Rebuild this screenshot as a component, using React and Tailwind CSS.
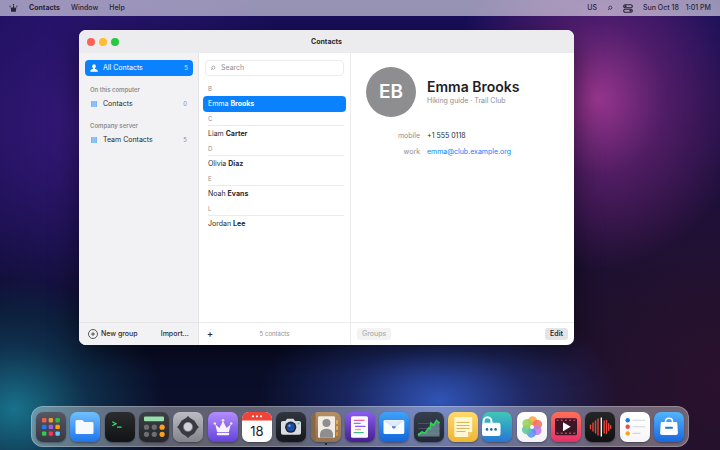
import { useState } from 'react';

// ---------------------------------------------------------
// Data
// ---------------------------------------------------------
const CONTACTS = [
  { first: 'Emma', last: 'Brooks', note: 'Hiking guide · Trail Club', mobile: '+1 555 0118', work: 'emma@club.example.org' },
  { first: 'Liam', last: 'Carter' },
  { first: 'Olivia', last: 'Diaz' },
  { first: 'Noah', last: 'Evans' },
  { first: 'Jordan', last: 'Lee' },
];

const GROUPS = [
  { title: 'On this computer', name: 'Contacts', count: 0 },
  { title: 'Company server', name: 'Team Contacts', count: 5 },
];

// ---------------------------------------------------------
// Small icons
// ---------------------------------------------------------
const Crown = ({ className }) => (
  <svg viewBox="0 0 20 18" className={className} fill="currentColor" aria-hidden="true">
    <path d="M3.200 6l4 3.600L10 3l2.800 6.600 4-3.600-1.500 8H4.700z" />
    <path d="M4.500 13.500h11v2.800c0 .7-.5 1.200-1.200 1.200H5.700c-.7 0-1.200-.5-1.200-1.200z" />
    <circle cx="2.200" cy="4.800" r="1.400" />
    <circle cx="10" cy="1.800" r="1.600" />
    <circle cx="17.800" cy="4.800" r="1.400" />
  </svg>
);

const Magnifier = ({ className }) => (
  <svg viewBox="0 0 10 10" className={className} fill="none" stroke="currentColor" strokeWidth="1.200" aria-hidden="true">
    <circle cx="5.600" cy="4.400" r="2.600" />
    <path d="M3.700 6.300L1.600 8.400" />
  </svg>
);

const Toggles = ({ className }) => (
  <svg viewBox="0 0 20 18" className={className} fill="none" stroke="currentColor" strokeWidth="2.200" aria-hidden="true">
    <rect x="1.500" y="1.500" width="17" height="6" rx="2.500" />
    <rect x="1.500" y="10.500" width="17" height="6" rx="2.500" />
    <circle cx="5" cy="4.500" r="2.200" fill="currentColor" stroke="none" />
    <circle cx="15" cy="13.500" r="2.200" fill="currentColor" stroke="none" />
  </svg>
);

const Person = ({ className }) => (
  <svg viewBox="0 0 16 16" className={className} fill="currentColor" aria-hidden="true">
    <ellipse cx="8" cy="4.500" rx="3.600" ry="4.200" />
    <path d="M6 8h4v2c3 .6 5.500 1.700 5.500 4.500v1H.5v-1C.5 11.700 3 10.600 6 10z" />
  </svg>
);

const Book = ({ className }) => (
  <svg viewBox="0 0 12 12" className={className} aria-hidden="true">
    <rect width="12" height="12" fill="#8fc4f9" />
    <path d="M0 0h1.500v12H0zM10.500 0H12v12h-1.500z" fill="#75b3f4" />
    <path d="M3 3h6M3 6h6M3 9h6" stroke="#7db8f6" strokeWidth="1" />
  </svg>
);

// ---------------------------------------------------------
// Dock
// ---------------------------------------------------------
const LAUNCH_COLORS = ['#f0604d', '#f59a23', '#34b84a', '#1e7bf0', '#a05be0', '#ff9f0a', '#34c759', '#f2385a', '#64c8ff'];
const PETALS = ['#fba63c', '#f4705f', '#c07de6', '#5a94f5', '#5cc89a', '#9bd05a'];
const WAVE = [[5.500, 3.500], [8, 8], [10.500, 12], [13, 16], [19.200, 12], [21.500, 13], [23.700, 6.500], [25.700, 2.500]];

const DOCK = [
  {
    name: 'Launchpad',
    tile: 'from-[#565763] to-[#373842]',
    art: LAUNCH_COLORS.map((c, i) => (
      <rect key={i} x={6 + (i % 3) * 6.700} y={6 + Math.floor(i / 3) * 6.700} width="4.400" height="4.400" rx="1.200" fill={c} />
    )),
  },
  {
    name: 'Files',
    tile: 'from-[#70c0ff] to-[#1f74ea]',
    art: <path d="M5.500 9.500c0-1 .6-1.600 1.600-1.600h5.200l2 2.200h7.600c1 0 1.600.6 1.600 1.600v8.700c0 1-.6 1.600-1.600 1.600H7.100c-1 0-1.600-.6-1.600-1.600z" fill="#f6f9ff" />,
  },
  {
    name: 'Terminal',
    tile: 'from-[#2b2c2e] to-[#121314]',
    art: <path d="M7.300 9.800l3.700 2-3.700 2M12 15.200h4.600" fill="none" stroke="#3ddc74" strokeWidth="1.300" />,
  },
  {
    name: 'Calculator',
    tile: 'from-[#3d4045] to-[#232528]',
    art: (
      <>
        <rect x="5" y="4.500" width="20" height="4.800" rx="1" fill="#97e0ab" />
        {[0, 1, 2, 3, 4, 5].map((i) => (
          <circle key={i} cx={7.500 + (i % 3) * 7.800} cy={i < 3 ? 15.200 : 22.300} r="2.600" fill={i % 3 === 2 ? '#ff9f1c' : '#6d6e72'} />
        ))}
      </>
    ),
  },
  {
    name: 'Settings',
    tile: 'from-[#babbc3] to-[#83848c]',
    art: (
      <>
        <circle cx="15" cy="15" r="9" fill="#383b42" />
        <path d="M12 7l3-3 3 3zM12 23l3 3 3-3zM7 12l-3 3 3 3zM23 12l3 3-3 3z" fill="#383b42" />
        <circle cx="15" cy="15" r="5" fill="#7b7d84" />
        <circle cx="15" cy="14.800" r="4.200" fill="#d0d2d7" />
      </>
    ),
  },
  {
    name: 'Crown',
    tile: 'from-[#b38cff] to-[#6541dc]',
    art: (
      <g fill="#f7f2ff">
        <path d="M7.300 12.300l4.100 3.600L15 9l3.600 6.900 4.100-3.600L20.900 20H9.100z" />
        <rect x="8.800" y="20.800" width="12.400" height="2.500" rx="1" />
        <circle cx="6.800" cy="11.500" r="1.300" fill="#ffe0b0" />
        <circle cx="15" cy="8.300" r="1.400" fill="#ffe0b0" />
        <circle cx="23.200" cy="11.500" r="1.300" fill="#ffe0b0" />
      </g>
    ),
  },
  {
    name: 'Calendar',
    tile: 'from-white to-white',
    art: (
      <>
        <rect width="30" height="8.500" fill="#f04438" />
        <circle cx="11" cy="4.300" r="1.100" fill="#fff" />
        <circle cx="15" cy="4.300" r="1.100" fill="#fff" />
        <circle cx="19" cy="4.300" r="1.100" fill="#fff" />
        <text x="15" y="23.800" textAnchor="middle" fontSize="13" fill="#1d1d1f">18</text>
      </>
    ),
  },
  {
    name: 'Camera',
    tile: 'from-[#30353e] to-[#15181e]',
    art: (
      <>
        <path d="M5 11c0-1.200.7-2 2-2h2.500l1.500-2.300h6.500L19 9h4c1.300 0 2 .8 2 2v9.700c0 1.200-.7 2-2 2H7c-1.300 0-2-.8-2-2z" fill="#d9dde1" />
        <circle cx="14.700" cy="15.200" r="5.600" fill="#20262f" />
        <circle cx="14.700" cy="15.200" r="4" fill="#1c4da6" />
        <circle cx="13.500" cy="13.800" r="1.200" fill="#6da4ee" />
        <circle cx="22.500" cy="11.500" r="1" fill="#3ecf8e" />
      </>
    ),
  },
  {
    name: 'Contacts',
    running: true,
    tile: 'from-[#b58f66] to-[#94714c]',
    art: (
      <>
        <rect width="4.500" height="30" fill="#8a6844" />
        <rect x="7" y="4.200" width="17" height="21.500" rx="1.300" fill="#f1ede4" />
        <circle cx="15.500" cy="11" r="4" fill="#8e8e90" />
        <path d="M9 25.700v-3c0-4 2.700-6 6.500-6s6.500 2 6.500 6v3z" fill="#8e8e90" />
        <rect x="25" y="8" width="2" height="4" rx=".8" fill="#e8b04a" />
        <rect x="25" y="14" width="2" height="4" rx=".8" fill="#e8b04a" />
        <rect x="25" y="20" width="2" height="4" rx=".8" fill="#d99636" />
      </>
    ),
  },
  {
    name: 'Text Editor',
    tile: 'from-[#8b5cf2] to-[#45208f]',
    art: (
      <>
        <rect x="6" y="4.200" width="17" height="21.600" rx="1.600" fill="#fbfaff" />
        <g fill="none" strokeWidth="1.300" strokeLinecap="round">
          <path d="M9.200 8.300h9.800" stroke="#ef5da0" />
          <path d="M9.200 11.300h6" stroke="#4a9df5" />
          <path d="M10.500 14.300h9.500" stroke="#8b5cf6" />
          <path d="M10.500 17.500h5" stroke="#efb35a" />
          <path d="M9.200 20.700h9" stroke="#45b98a" />
        </g>
      </>
    ),
  },
  {
    name: 'Mail',
    tile: 'from-[#3fa2fa] to-[#1565da]',
    art: (
      <>
        <rect x="4.500" y="8" width="20.800" height="14" rx="1.500" fill="#f8fbff" />
        <path d="M5 8.500l8.500 5.800h3L25 8.500" fill="#dfeafa" stroke="#c3d8f5" strokeWidth=".6" />
        <path d="M13 14.200h3.700v1.200l-1.800 1.300-1.900-1.300z" fill="#3b84e2" />
      </>
    ),
  },
  {
    name: 'Activity',
    tile: 'from-[#363e4e] to-[#222834]',
    art: (
      <>
        <path d="M4 11.500h22M4 16.500h22M4 21.500h22" stroke="#566072" strokeWidth=".7" />
        <path d="M4 23l4-3 3 1.200 3.500-5.200 1 .8L17 11l2.500 2.500 3-5L25.500 11v13.500H4z" fill="#6f8a94" opacity=".85" />
        <path d="M4 23l4-3 3 1.200 3.500-5.200 1.500.8 1-5.800 2.500 2.500 3-5 3 2.500" fill="none" stroke="#30d158" strokeWidth="1.700" />
      </>
    ),
  },
  {
    name: 'Notes',
    tile: 'from-[#ffd86b] to-[#eeb62f]',
    art: (
      <>
        <path d="M7.500 5h15.500c.7 0 1.200.5 1.200 1.200V20l-4 5H7.500c-.7 0-1.200-.5-1.200-1.200V6.200c0-.7.500-1.200 1.200-1.200z" fill="#fff6d3" />
        <path d="M20 25v-5h4.200z" fill="#e8c970" />
        <path d="M8.500 10.500h13M8.500 13.500h13M8.500 16.500h13M8.500 19.500h9" stroke="#dcb65b" strokeWidth="1.100" />
      </>
    ),
  },
  {
    name: 'Passwords',
    tile: 'from-[#43c6b6] to-[#2b75d3]',
    art: (
      <>
        <path d="M1.500 12V9.500c0-2.500 1.700-4.300 4-4.300s4 1.800 4 4.300V12" fill="none" stroke="#fff" strokeWidth="2" />
        <rect x="0" y="10.800" width="18.500" height="13.200" rx="2" fill="#fff" />
        <circle cx="5" cy="17.400" r="1.300" fill="#2366b4" />
        <circle cx="9.300" cy="17.400" r="1.300" fill="#2366b4" />
        <circle cx="13.600" cy="17.400" r="1.300" fill="#2366b4" />
      </>
    ),
  },
  {
    name: 'Photos',
    tile: 'from-white to-[#f3f3f5]',
    art: (
      <>
        {PETALS.map((c, i) => (
          <ellipse key={c} cx="15" cy="9.200" rx="4.700" ry="4.900" fill={c} opacity=".88" transform={`rotate(${i * 60 + 5} 15 15)`} />
        ))}
        <circle cx="15" cy="15" r="2" fill="#fff" />
      </>
    ),
  },
  {
    name: 'Video',
    tile: 'from-[#ff6e57] to-[#e42d69]',
    art: (
      <>
        <rect x="4" y="6.200" width="22" height="17" rx="1.500" fill="#3a1626" />
        <path d="M5.500 8.300h19M5.500 21.200h19" stroke="#b8405a" strokeWidth="1.400" strokeDasharray="2 2.200" />
        <path d="M12 10.300v9l7.700-4.500z" fill="#fff" />
      </>
    ),
  },
  {
    name: 'Recorder',
    tile: 'from-[#252628] to-[#101112]',
    art: (
      <>
        {WAVE.map(([x, h]) => (
          <path key={x} d={`M${x} ${15 - h / 2}v${h}`} stroke="#e8443a" strokeWidth="1.400" strokeLinecap="round" />
        ))}
        <path d="M16.300 5.500v19" stroke="#fff" strokeWidth="1.300" />
      </>
    ),
  },
  {
    name: 'Reminders',
    tile: 'from-white to-[#f6f6f8]',
    art: (
      <>
        <path d="M12.500 8.200H25M12.500 14.800H25M12.500 21.400h8" stroke="#d5d6da" strokeWidth="1.100" />
        <circle cx="7.700" cy="8.200" r="2.200" fill="#1a78f2" />
        <circle cx="7.700" cy="14.800" r="2.200" fill="#f04a41" />
        <circle cx="7.700" cy="21.400" r="2.200" fill="#fba11b" />
      </>
    ),
  },
  {
    name: 'Store',
    tile: 'from-[#53b2fb] to-[#1868df]',
    art: (
      <>
        <path d="M11.500 11V9.500c0-2 1.400-3.300 3.500-3.300s3.500 1.300 3.500 3.300V11" fill="none" stroke="#fff" strokeWidth="1.500" />
        <path d="M8 10h14c.8 0 1.300.5 1.300 1.300l.6 9.700c0 1.300-.7 2-2 2H8.100c-1.300 0-2-.7-2-2l.6-9.700C6.700 10.500 7.200 10 8 10z" fill="#fff" />
        <rect x="11" y="14.800" width="8" height="1.900" rx=".9" fill="#2372dc" />
      </>
    ),
  },
];

function Dock() {
  return (
    <nav aria-label="Dock" className="mx-auto mb-[3px] flex w-[658px] max-w-full justify-between rounded-[12px] border border-white/25 bg-white/35 px-1 pt-[5px] pb-1">
      {DOCK.map((app) => (
        <button key={app.name} type="button" aria-label={app.name} className="relative size-[30px]">
          <span className={`block size-[30px] overflow-hidden rounded-[7px] bg-linear-to-b shadow-[0_1px_2px_rgba(0,0,0,0.35)] ${app.tile}`}>
            <svg viewBox="0 0 30 30" className="size-full" aria-hidden="true">{app.art}</svg>
          </span>
          {app.running && <span className="absolute top-[31px] left-[14px] size-[2px] rounded-full bg-[#15151c]" />}
        </button>
      ))}
    </nav>
  );
}

function MenuBar() {
  return (
    <header className="flex h-4 items-center justify-between bg-white/55 px-[9px] text-[#2a2438]">
      <nav className="flex items-center gap-[11px] font-medium">
        <button type="button" aria-label="System menu"><Crown className="h-2 w-[9px]" /></button>
        <button type="button" className="font-bold">Contacts</button>
        <button type="button">Window</button>
        <button type="button">Help</button>
      </nav>
      <div className="flex items-center gap-[10px] font-medium">
        <span>US</span>
        <button type="button" aria-label="Search"><Magnifier className="size-[6px]" /></button>
        <button type="button" aria-label="Control center"><Toggles className="h-[9px] w-[10px]" /></button>
        <span className="flex gap-[7px]"><span>Sun Oct 18</span><span>1:01 PM</span></span>
      </div>
    </header>
  );
}

function Sidebar() {
  return (
    <aside className="flex flex-col border-r border-[#e4e4e7] bg-[#f2f2f4]">
      <div className="flex flex-1 flex-col gap-[7px] px-[6px] pt-[7px]">
        <button type="button" className="mr-[-1px] flex h-4 items-center rounded-[4px] bg-[#0a82ff] px-[5px] text-white">
          <Person className="mr-[5px] size-2" />
          <span className="flex-1 text-left">All Contacts</span>
          <span className="text-[6px] text-white/80">5</span>
        </button>
        {GROUPS.map((g) => (
          <section key={g.title}>
            <h2 className="px-[5px] text-[6px] leading-[13px] font-semibold text-[#8e8e93]">{g.title}</h2>
            <button type="button" className="flex h-4 w-full items-center px-[5px]">
              <Book className="mr-[6px] ml-px size-[6px]" />
              <span className="flex-1 text-left">{g.name}</span>
              <span className="text-[6px] text-[#8e8e93]">{g.count}</span>
            </button>
          </section>
        ))}
      </div>
      <div className="flex h-[23px] items-center justify-between border-t border-[#e4e4e7] px-[9px] font-medium">
        <button type="button" className="flex items-center gap-[3px]">
          <svg viewBox="0 0 20 20" className="size-[10px]" fill="none" stroke="currentColor" strokeWidth="1.500" aria-hidden="true">
            <circle cx="10" cy="10" r="9" />
            <path d="M10 6v8M6 10h8" />
          </svg>
          New group
        </button>
        <button type="button">Import…</button>
      </div>
    </aside>
  );
}

function ContactList({ selected, onSelect }) {
  const [query, setQuery] = useState('');
  const shown = CONTACTS.filter((c) => `${c.first} ${c.last}`.toLowerCase().includes(query.toLowerCase()));

  return (
    <section className="flex flex-col border-r border-[#ececee]">
      <div className="flex-1 px-1 pt-[7px]">
        <div className="mx-[2px] mb-[6px] flex h-4 items-center gap-[5px] rounded-[4px] border border-[#ebebed] px-1 text-[#8e8e93]">
          <Magnifier className="size-[6px]" />
          <input
            type="text"
            aria-label="Search contacts"
            value={query}
            onChange={(e) => setQuery(e.target.value)}
            placeholder="Search"
            className="h-[14px] min-w-0 flex-1 leading-[14px] text-[#2a2a2e] outline-none placeholder:text-[#8e8e93]"
          />
        </div>
        {shown.map((c) => {
          const active = c === selected;
          return (
            <div key={c.last}>
              <h3 className={`mr-[2px] ml-[5px] h-[14px] text-[6px] leading-[13px] text-[#8e8e93] ${active ? '' : 'border-b border-[#ebebed]'}`}>
                {c.last[0]}
              </h3>
              <button
                type="button"
                onClick={() => onSelect(c)}
                className={`block h-4 w-full rounded-[4px] px-[5px] text-left ${active ? 'bg-[#0a82ff] text-white' : ''}`}
              >
                {c.first} <strong className="font-bold">{c.last}</strong>
              </button>
            </div>
          );
        })}
      </div>
      <div className="grid h-[23px] grid-cols-[1fr_auto_1fr] items-center border-t border-[#ececee] px-2">
        <button type="button" aria-label="Add contact" className="justify-self-start text-[9px] font-semibold">+</button>
        <span className="text-[6px] text-[#8e8e93]">{CONTACTS.length} contacts</span>
      </div>
    </section>
  );
}

function ContactCard({ contact }) {
  return (
    <section className="flex flex-col">
      <div className="flex-1 px-[15px] pt-[14px]">
        <div className="flex items-center gap-[11px]">
          <div className="flex size-[50px] items-center justify-center rounded-full bg-[#8e8e91] text-[19px] font-semibold text-white">
            {contact.first[0]}{contact.last[0]}
          </div>
          <div>
            <h1 className="text-[14px] leading-[18px] font-semibold text-[#1d1d1f]">{contact.first} {contact.last}</h1>
            <p className="leading-[10px] text-[#8e8e93]">{contact.note}</p>
          </div>
        </div>
        <dl className="mt-[11px] grid grid-cols-[54px_1fr] gap-x-[7px] leading-[16px]">
          {contact.mobile && (
            <>
              <dt className="text-right text-[#8e8e93]">mobile</dt>
              <dd>{contact.mobile}</dd>
            </>
          )}
          {contact.work && (
            <>
              <dt className="text-right text-[#8e8e93]">work</dt>
              <dd><a href={`mailto:${contact.work}`} className="text-[#0a82ff]">{contact.work}</a></dd>
            </>
          )}
        </dl>
      </div>
      <div className="flex h-[23px] items-center justify-between border-t border-[#ececee] px-[6px]">
        <button type="button" disabled className="h-3 rounded-[3px] bg-[#f3f3f4] px-[5px] leading-[12px] font-medium text-[#adadb1]">Groups</button>
        <button type="button" className="h-3 rounded-[3px] bg-[#e4e4e7] px-[5px] leading-[12px] font-semibold">Edit</button>
      </div>
    </section>
  );
}

export default function App() {
  const [selected, setSelected] = useState(CONTACTS[0]);

  return (
    <div
      className="flex h-screen flex-col overflow-hidden bg-[#0c0d28] font-['Inter',sans-serif] text-[7px] leading-[16px] text-[#2a2a2e]
      bg-[radial-gradient(ellipse_150px_170px_at_83%_22%,rgba(165,58,148,0.9),rgba(115,38,122,0.6)_45%,transparent),radial-gradient(ellipse_180px_110px_at_61%_89%,rgba(50,88,190,0.95),rgba(36,62,150,0.5)_50%,transparent),radial-gradient(ellipse_150px_130px_at_2%_91%,rgba(26,125,150,0.9),rgba(20,85,115,0.45)_50%,transparent),radial-gradient(ellipse_220px_200px_at_12%_28%,rgba(62,27,132,0.8),transparent),radial-gradient(ellipse_420px_380px_at_100%_85%,rgba(44,18,46,0.95),transparent),linear-gradient(to_bottom,#180f5c,#130d48_40%,#0a0f2c_70%,#0b0d26)]"
    >
      <MenuBar />
      <main className="relative min-h-0 flex-1">
        <div className="absolute top-[14px] left-[79px] flex h-[315px] w-[495px] flex-col overflow-hidden rounded-[7px] bg-white shadow-[0_10px_28px_rgba(0,0,0,0.5)]">
          <div className="grid h-[23px] grid-cols-[1fr_auto_1fr] items-center bg-[#ececee] px-2">
            <div className="flex gap-1">
              <button type="button" aria-label="Close" className="size-2 rounded-full bg-[#ff5f57]" />
              <button type="button" aria-label="Minimize" className="size-2 rounded-full bg-[#febc2e]" />
              <button type="button" aria-label="Zoom" className="size-2 rounded-full bg-[#28c840]" />
            </div>
            <span className="font-bold">Contacts</span>
          </div>
          <div className="grid flex-1 grid-cols-[120px_152px_1fr]">
            <Sidebar />
            <ContactList selected={selected} onSelect={setSelected} />
            <ContactCard contact={selected} />
          </div>
        </div>
      </main>
      <Dock />
    </div>
  );
}
